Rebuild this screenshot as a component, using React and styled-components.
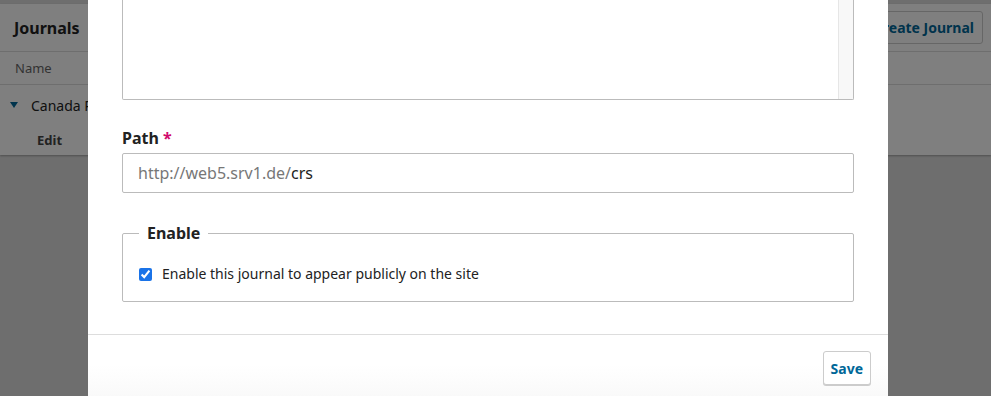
import React from 'react';
import styled, { createGlobalStyle } from 'styled-components';

const GlobalStyle = createGlobalStyle`
    html, body {
        margin: 0;
        padding: 0;
        background: #ddd;
        font-family: "Noto Sans", "Open Sans", sans-serif;
        color: #222;
        overflow: hidden;
    }
`;

const Page = styled.div`
    padding-top: 4px;
    height: 396px;
    box-sizing: border-box;
`;

const Panel = styled.div`
    background: #fff;
    box-shadow: 0 1px 2px rgba(0, 0, 0, 0.3);
`;

const PanelHeader = styled.div`
    display: flex;
    justify-content: space-between;
    align-items: center;
    height: 48px;
    padding: 0 8px 0 14px;
    border-bottom: 1px solid #ddd;
    box-sizing: border-box;
`;

const PanelTitle = styled.h2`
    margin: 0;
    font-size: 16px;
    font-weight: 700;
    line-height: 20px;
`;

const HeaderButton = styled.button`
    height: 33px;
    padding: 0 8px;
    border: 1px solid #ccc;
    border-radius: 3px;
    background: #fff;
    color: #006798;
    font-family: inherit;
    font-size: 14px;
    font-weight: 700;
`;

const ColumnHead = styled.div`
    height: 32px;
    display: flex;
    align-items: center;
    padding-left: 15px;
    font-size: 13px;
    color: #666;
    border-bottom: 1px solid #ddd;
`;

const Row = styled.div`
    display: flex;
    align-items: center;
    gap: 8px;
    height: 40px;
    padding-left: 10px;
    font-size: 14px;
`;

const Arrow = styled.span`
    width: 0;
    height: 0;
    border-left: 4px solid transparent;
    border-right: 4px solid transparent;
    border-top: 6px solid #006798;
    margin-right: 5px;
`;

const RowActions = styled.div`
    height: 30px;
    padding-left: 37px;
    display: flex;
    align-items: center;
    font-size: 13px;
    font-weight: 700;
    color: #444;
`;

const Overlay = styled.div`
    position: fixed;
    inset: 0;
    background: rgba(0, 0, 0, 0.5);
    display: flex;
    justify-content: center;
    align-items: flex-start;
`;

const Modal = styled.div`
    width: 800px;
    margin-left: -15px;
    margin-top: -100px;
    background: #fff;
    display: flex;
    flex-direction: column;
`;

const Body = styled.div`
    padding: 0 34px 32px 34px;
    display: flex;
    flex-direction: column;
`;

const TextArea = styled.div`
    height: 200px;
    border: 1px solid #bbb;
    border-top: none;
    border-radius: 0 0 2px 2px;
    display: flex;
    justify-content: flex-end;
    box-sizing: border-box;
`;

const Scrollbar = styled.div`
    width: 14px;
    background: #f8f8f8;
    border-left: 1px solid #e6e6e6;
`;

const Field = styled.div`
    margin-top: 26px;
    display: flex;
    flex-direction: column;
    gap: 3px;
`;

const Label = styled.label`
    font-size: 16px;
    font-weight: 700;
    line-height: 24px;
`;

const Required = styled.span`
    color: #d00a6c;
    margin-left: 4px;
`;

const Input = styled.div`
    height: 40px;
    border: 1px solid #bbb;
    border-radius: 2px;
    display: flex;
    align-items: center;
    padding: 0 15px;
    font-size: 16px;
    box-sizing: border-box;
`;

const Prefix = styled.span`
    color: #777;
`;

const Fieldset = styled.fieldset`
    margin: 30px 0 0;
    padding: 21px 16px 17px;
    border: 1px solid #bbb;
    border-radius: 2px;
    min-inline-size: auto;
`;

const Legend = styled.legend`
    padding: 0 8px;
    font-size: 16px;
    font-weight: 700;
    line-height: 20px;
`;

const CheckRow = styled.label`
    display: flex;
    align-items: center;
    gap: 10px;
    font-size: 14px;
    line-height: 20px;
`;

const Checkbox = styled.input`
    margin: 0;
    width: 13px;
    height: 13px;
    accent-color: #1a73e8;
`;

const Footer = styled.div`
    border-top: 1px solid #ddd;
    padding: 16px 17px 24px;
    display: flex;
    justify-content: flex-end;
    background: linear-gradient(#fff 40%, #f7f7f7);
`;

const SaveButton = styled.button`
    height: 34px;
    padding: 0 7px;
    border: 1px solid #ccc;
    border-radius: 3px;
    background: #fff;
    box-shadow: 0 1px 0 #ccc;
    color: #006798;
    font-family: inherit;
    font-size: 14px;
    font-weight: 700;
`;

export default function App() {
    return (
        <>
            <GlobalStyle />
            <Page>
                <Panel>
                    <PanelHeader>
                        <PanelTitle>Journals</PanelTitle>
                        <HeaderButton>Create Journal</HeaderButton>
                    </PanelHeader>
                    <ColumnHead>Name</ColumnHead>
                    <Row>
                        <Arrow />
                        Canada Review
                    </Row>
                    <RowActions>Edit</RowActions>
                </Panel>
            </Page>
            <Overlay>
                <Modal>
                    <Body>
                        <TextArea>
                            <Scrollbar />
                        </TextArea>
                        <Field>
                            <Label>Path<Required>*</Required></Label>
                            <Input>
                                <Prefix>http://web5.srv1.de/</Prefix>crs
                            </Input>
                        </Field>
                        <Fieldset>
                            <Legend>Enable</Legend>
                            <CheckRow>
                                <Checkbox type="checkbox" defaultChecked />
                                Enable this journal to appear publicly on the site
                            </CheckRow>
                        </Fieldset>
                    </Body>
                    <Footer>
                        <SaveButton>Save</SaveButton>
                    </Footer>
                </Modal>
            </Overlay>
        </>
    );
}
